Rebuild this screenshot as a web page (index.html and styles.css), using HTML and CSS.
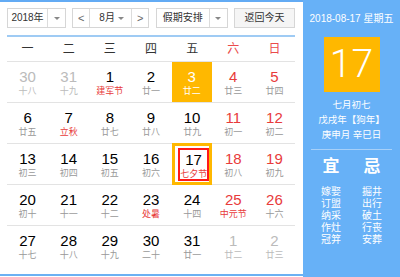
FILE: index.html
```html
<!DOCTYPE html>
<html lang="zh">
<head>
<meta charset="utf-8">
<link rel="stylesheet" href="styles.css">
</head>
<body>
<div class="cal">
  <div class="main">
    <div class="toolbar">
      <div class="sel sel-year"><span class="sel-text">2018年</span><span class="sel-arrow"><i class="tri"></i></span></div>
      <div class="sel sel-month"><span class="nav">&lt;</span><span class="sel-text month-text">8月<i class="tri"></i></span><span class="nav nav-r">&gt;</span></div>
      <div class="sel sel-hol"><span class="sel-text">假期安排</span><span class="sel-arrow"><i class="tri"></i></span></div>
      <div class="btn">返回今天</div>
    </div>
    <div class="rule"></div>
    <div class="weekdays">
      <span>一</span><span>二</span><span>三</span><span>四</span><span>五</span><span class="we">六</span><span class="we">日</span>
    </div>
    <div class="grid">
      <div class="row">
        <div class="day other"><b>30</b><i>十八</i></div>
        <div class="day other"><b>31</b><i>十九</i></div>
        <div class="day"><b>1</b><i class="red">建军节</i></div>
        <div class="day"><b>2</b><i>廿一</i></div>
        <div class="day hl"><b>3</b><i>廿二</i></div>
        <div class="day wk"><b>4</b><i>廿三</i></div>
        <div class="day wk"><b>5</b><i>廿四</i></div>
      </div>
      <div class="row">
        <div class="day"><b>6</b><i>廿五</i></div>
        <div class="day"><b>7</b><i class="red">立秋</i></div>
        <div class="day"><b>8</b><i>廿七</i></div>
        <div class="day"><b>9</b><i>廿八</i></div>
        <div class="day"><b>10</b><i>廿九</i></div>
        <div class="day wk"><b>11</b><i>初一</i></div>
        <div class="day wk"><b>12</b><i>初二</i></div>
      </div>
      <div class="row">
        <div class="day"><b>13</b><i>初三</i></div>
        <div class="day"><b>14</b><i>初四</i></div>
        <div class="day"><b>15</b><i>初五</i></div>
        <div class="day"><b>16</b><i>初六</i></div>
        <div class="day sel-day"><span class="ring"><b>17</b><i class="red">七夕节</i></span></div>
        <div class="day wk"><b>18</b><i>初八</i></div>
        <div class="day wk"><b>19</b><i>初九</i></div>
      </div>
      <div class="row">
        <div class="day"><b>20</b><i>初十</i></div>
        <div class="day"><b>21</b><i>十一</i></div>
        <div class="day"><b>22</b><i>十二</i></div>
        <div class="day"><b>23</b><i class="red">处暑</i></div>
        <div class="day"><b>24</b><i>十四</i></div>
        <div class="day wk"><b>25</b><i class="red">中元节</i></div>
        <div class="day wk"><b>26</b><i>十六</i></div>
      </div>
      <div class="row">
        <div class="day"><b>27</b><i>十七</i></div>
        <div class="day"><b>28</b><i>十八</i></div>
        <div class="day"><b>29</b><i>十九</i></div>
        <div class="day"><b>30</b><i>二十</i></div>
        <div class="day"><b>31</b><i>廿一</i></div>
        <div class="day other"><b>1</b><i>廿二</i></div>
        <div class="day other"><b>2</b><i>廿三</i></div>
      </div>
    </div>
  </div>
  <div class="side">
    <div class="side-date">2018-08-17 星期五</div>
    <div class="bigday">17</div>
    <div class="lunar">
      <div>七月初七</div>
      <div>戊戌年【狗年】</div>
      <div>庚申月 辛巳日</div>
    </div>
    <div class="side-rule"></div>
    <div class="yiji">
      <div class="col">
        <div class="yj-title">宜</div>
        <div>嫁娶</div><div>订盟</div><div>纳采</div><div>作灶</div><div>冠笄</div>
      </div>
      <div class="col">
        <div class="yj-title">忌</div>
        <div>掘井</div><div>出行</div><div>破土</div><div>行丧</div><div>安葬</div>
      </div>
    </div>
  </div>
</div>
</body>
</html>
```

FILE: styles.css
```css
html, body {
  margin: 0;
  padding: 0;
  background: #fff;
}
body {
  width: 400px;
  height: 277px;
  overflow: hidden;
  font-family: "Liberation Sans", "Noto Sans CJK SC", sans-serif;
  color: #333;
}
.cal {
  display: flex;
  align-items: flex-start;
  height: 277px;
}
.main {
  width: 303px;
  height: 276px;
  box-sizing: border-box;
  padding: 6px 8px 0 7px;
  border-top: 2px solid #63abf4;
  border-bottom: 2px solid #6cb1f3;
}
.toolbar {
  display: flex;
  justify-content: space-between;
  height: 20px;
}
.sel, .btn {
  box-sizing: border-box;
  height: 20px;
  border: 1px solid #d6d6d6;
  background: #fff;
  display: flex;
  align-items: stretch;
  font-size: 10px;
  line-height: 18px;
  color: #333;
}
.sel-year { width: 59px; }
.sel-month { width: 77px; }
.sel-hol { width: 72px; }
.sel-text {
  flex: 1;
  text-align: center;
}
.sel-arrow {
  width: 17px;
  border-left: 1px solid #dcdcdc;
  display: flex;
  align-items: center;
  justify-content: center;
}
.tri {
  display: inline-block;
  width: 0;
  height: 0;
  border-left: 3px solid transparent;
  border-right: 3px solid transparent;
  border-top: 3px solid #888;
}
.nav {
  width: 16px;
  text-align: center;
  border-right: 1px solid #dcdcdc;
  color: #666;
  font-size: 11px;
}
.nav-r {
  border-right: none;
  border-left: 1px solid #dcdcdc;
}
.month-text {
  display: flex;
  align-items: center;
  justify-content: space-between;
  padding: 0 7px 0 9px;
}
.btn {
  width: 61px;
  background: #f5f5f5;
  justify-content: center;
}
.rule {
  height: 2px;
  margin-top: 7px;
  background: #9fcbf4;
}
.weekdays {
  display: grid;
  grid-template-columns: repeat(7, 1fr);
  height: 24px;
  line-height: 24px;
  font-size: 12px;
  text-align: center;
  color: #333;
}
.weekdays .we { color: #ea4b4b; }
.row {
  display: grid;
  grid-template-columns: repeat(7, 1fr);
  height: 41px;
  box-sizing: border-box;
  border-top: 1px solid #e3e3e3;
}
.day {
  display: flex;
  flex-direction: column;
  align-items: center;
  padding-top: 6px;
  position: relative;
}
.day b {
  font-weight: normal;
  font-size: 15px;
  line-height: 17px;
  color: #000;
}
.day i {
  font-style: normal;
  font-size: 9px;
  line-height: 12px;
  color: #999;
}
.day i.red { color: #e83b3b; }
.day.wk b { color: #e83b3b; }
.day.other b { color: #bbb; }
.day.other i { color: #bbb; }
.day.hl {
  background: #ffb800;
  margin-right: 1px;
}
.day.hl b, .day.hl i { color: #fff; }
.sel-day {
  padding-top: 0;
}
.sel-day::before {
  content: "";
  position: absolute;
  top: -1px;
  bottom: -1px;
  left: 0;
  right: 1px;
  border: 3px solid #ffb800;
}
.ring {
  margin-top: 4px;
  margin-left: 3px;
  box-sizing: border-box;
  width: 31px;
  height: 33px;
  border: 2px solid #ff1a1a;
  display: flex;
  flex-direction: column;
  align-items: center;
  padding-top: 1px;
}
.side {
  width: 97px;
  height: 277px;
  background: #67b1f7;
  color: #fff;
  text-align: center;
  padding-top: 11px;
  box-sizing: border-box;
}
.side-date {
  font-size: 10px;
  line-height: 16px;
}
.bigday {
  width: 56px;
  height: 55px;
  margin: 10px auto 0;
  background: #ffb800;
  font-family: Roboto, "Liberation Sans", sans-serif;
  font-weight: 300;
  font-size: 39px;
  line-height: 55px;
  color: #fff;
}
.lunar {
  margin-top: 5px;
  font-size: 9.5px;
  line-height: 15px;
}
.side-rule {
  width: 81px;
  height: 1px;
  margin: 7px auto 0;
  background: #a7d0f8;
}
.yiji {
  display: grid;
  grid-template-columns: 41px 41px;
  justify-content: center;
  margin-top: 7px;
  font-size: 10px;
  line-height: 12px;
}
.yj-title {
  font-size: 17px;
  font-weight: bold;
  line-height: 20px;
  margin-bottom: 9px;
}
```
